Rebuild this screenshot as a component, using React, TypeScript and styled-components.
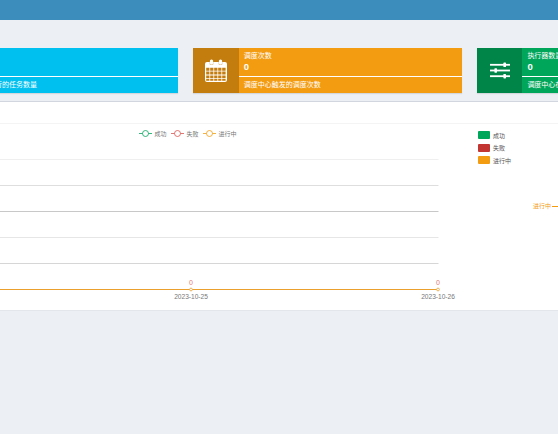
import React from 'react';
import styled, { createGlobalStyle } from 'styled-components';

// Dashboard stat cards and the report panel
const GlobalStyle = createGlobalStyle`
  html, body {
    margin: 0;
    padding: 0;
    height: 100%;
    background: #ecf0f5;
    overflow: hidden;
  }
  body {
    font-family: "Liberation Sans", "Noto Sans CJK SC", sans-serif;
  }
`;

const Page = styled.div`
  width: 558px;
  height: 434px;
  overflow: hidden;
  background: #ecf0f5;
`;

const TopBar = styled.div`
  height: 20px;
  background: #3c8dbc;
`;

const CardRow = styled.div`
  display: flex;
  gap: 15px;
  margin: 28px 0 0 -90.4px;
  width: 900px;
`;

const Card = styled.div<{ $bg: string }>`
  display: flex;
  flex: none;
  width: 268.7px;
  height: 45px;
  background: ${p => p.$bg};
  color: #fff;
  box-shadow: 0 1px 1px rgba(0, 0, 0, 0.1);
`;

const IconBox = styled.div<{ $bg: string }>`
  display: flex;
  flex: none;
  align-items: center;
  justify-content: center;
  width: 45.4px;
  background: ${p => p.$bg};
`;

const CardBody = styled.div`
  display: flex;
  flex: 1;
  flex-direction: column;
`;

const CardTitle = styled.div`
  padding: 4px 0 0 5px;
  font-size: 7px;
  line-height: 8px;
  white-space: nowrap;
`;

const CardValue = styled.div`
  padding: 1px 0 0 5px;
  font-size: 9.5px;
  font-weight: 700;
  line-height: 12px;
`;

const CardRule = styled.div`
  height: 1px;
  margin-top: 3px;
  background: #fff;
`;

const CardNote = styled.div`
  padding: 4px 0 0 5px;
  font-size: 7px;
  line-height: 8px;
  white-space: nowrap;
`;

const Panel = styled.section`
  height: 208px;
  margin-top: 8px;
  background: #fff;
  border-top: 1px solid #d2d6de;
  border-bottom: 1px solid #e3e6ea;
`;

const PanelHead = styled.div`
  height: 21px;
  border-bottom: 1px solid #f4f4f4;
`;

const PanelBody = styled.div`
  display: flex;
`;

const LineChart = styled.svg`
  display: block;
  flex: none;
  width: 478px;
  height: 186px;
`;

const SideChart = styled.div`
  display: flex;
  flex: 1;
  flex-direction: column;
  min-width: 0;
`;

const SideLegend = styled.ul`
  display: flex;
  flex-direction: column;
  gap: 4.5px;
  margin: 0;
  padding: 7px 0 0;
  list-style: none;
`;

const SideItem = styled.li`
  display: flex;
  align-items: center;
  gap: 3px;
  height: 8px;
  color: #555;
  font-size: 6px;
  white-space: nowrap;
`;

const Swatch = styled.span<{ $bg: string }>`
  width: 12px;
  height: 8px;
  border-radius: 1px;
  background: ${p => p.$bg};
`;

const SliceLabel = styled.div`
  display: flex;
  align-items: center;
  gap: 1px;
  margin: 38px 0 0 55px;
  color: #f39c12;
  font-size: 6px;
  line-height: 8px;
  white-space: nowrap;
`;

const SliceLead = styled.span`
  flex: none;
  width: 8px;
  height: 1px;
  background: #f39c12;
`;

const CalendarIcon = () => (
  <svg width="22" height="24" viewBox="0 0 22 24" fill="none">
    <path
      fillRule="evenodd"
      fill="#fff"
      d="M2 3h2.8v2.5h3.4V3h5.6v2.5h3.4V3H20a2 2 0 0 1 2 2v16a2 2 0 0 1-2 2H2a2 2 0 0 1-2-2V5a2 2 0 0 1 2-2zM1.2 8.8v3h3.2v-3zm4 0v3h3.2v-3zm4 0v3h3.2v-3zm4 0v3h3.2v-3zm4 0v3h3.4v-3zM1.2 12.6v3h3.2v-3zm4 0v3h3.2v-3zm4 0v3h3.2v-3zm4 0v3h3.2v-3zm4 0v3h3.4v-3zM1.2 16.4v2.8h3.2v-2.8zm4 0v2.8h3.2v-2.8zm4 0v2.8h3.2v-2.8zm4 0v2.8h3.2v-2.8zm4 0v2.8h3.4v-2.8zM1.2 20v1.8h3.2V20zm4 0v1.8h3.2V20zm4 0v1.8h3.2V20zm4 0v1.8h3.2V20zm4 0v1.8h3.4V20z"
    />
    <rect x="4.9" y="0.5" width="3.2" height="5" rx="1.5" fill="#fff" />
    <rect x="13.9" y="0.5" width="3.2" height="5" rx="1.5" fill="#fff" />
  </svg>
);

const SlidersIcon = () => (
  <svg width="20" height="17" viewBox="0 0 20 17" fill="#fff">
    <rect x="0" y="1.9" width="20" height="1.8" />
    <rect x="13.4" y="0.6" width="2.6" height="4.4" rx="0.6" />
    <rect x="0" y="7.6" width="20" height="1.8" />
    <rect x="4.4" y="6.3" width="2.6" height="4.4" rx="0.6" />
    <rect x="0" y="13.3" width="20" height="1.8" />
    <rect x="13.4" y="12" width="2.6" height="4.4" rx="0.6" />
  </svg>
);

const cards = [
  {
    bg: '#00c0ef',
    iconBg: '#00a7d0',
    title: '任务数量',
    note: '调度中心运行的任务数量',
    icon: null
  },
  {
    bg: '#f39c12',
    iconBg: '#c27d0e',
    title: '调度次数',
    note: '调度中心触发的调度次数',
    icon: <CalendarIcon />
  },
  {
    bg: '#00a65a',
    iconBg: '#008548',
    title: '执行器数量',
    note: '调度中心在线的执行器机器数量',
    icon: <SlidersIcon />
  }
];

// y of each horizontal split line, relative to the chart
const gridLines = [
  { y: 35.5, color: '#efefef' },
  { y: 61.5, color: '#dedede' },
  { y: 87.5, color: '#c8c8c8' },
  { y: 113.5, color: '#e6e6e6' },
  { y: 139.5, color: '#d6d6d6' }
];

const axisY = 165.5;

const legend = [
  { x: 139, label: '成功', color: '#00a65a' },
  { x: 171, label: '失败', color: '#d9534f' },
  { x: 203, label: '进行中', color: '#f39c12' }
];

const points = [
  { x: 191, date: '2023-10-25' },
  { x: 438, date: '2023-10-26' }
];

const sideLegend = [
  { label: '成功', color: '#00a65a' },
  { label: '失败', color: '#c23531' },
  { label: '进行中', color: '#f39c12' }
];

const App: React.FC = () => {
  return (
    <Page>
      <GlobalStyle />
      <TopBar />
      <CardRow>
        {cards.map(card => (
          <Card key={card.title} $bg={card.bg}>
            <IconBox $bg={card.iconBg}>{card.icon}</IconBox>
            <CardBody>
              <CardTitle>{card.title}</CardTitle>
              <CardValue>0</CardValue>
              <CardRule />
              <CardNote>{card.note}</CardNote>
            </CardBody>
          </Card>
        ))}
      </CardRow>
      <Panel>
        <PanelHead />
        <PanelBody>
          <LineChart viewBox="0 0 478 186">
            {legend.map(item => (
              <g key={item.label}>
                <line x1={item.x} x2={item.x + 13} y1="9.5" y2="9.5" stroke={item.color} strokeWidth="0.8" />
                <circle cx={item.x + 6.5} cy="9.5" r="3" fill="#fff" stroke={item.color} strokeWidth="0.8" />
                <text x={item.x + 15.5} y="11.8" fontSize="6" fill="#777">{item.label}</text>
              </g>
            ))}
            {gridLines.map(line => (
              <line key={line.y} x1="0" x2="438.5" y1={line.y} y2={line.y} stroke={line.color} strokeWidth="1" />
            ))}
            <line x1="0" x2="438.5" y1={axisY} y2={axisY} stroke="#eb9f2c" strokeWidth="1.2" />
            {points.map(point => (
              <g key={point.date}>
                <text x={point.x} y={axisY - 5} fontSize="7" fill="#e07a76" textAnchor="middle">0</text>
                <circle cx={point.x} cy={axisY} r="1.4" fill="#fff" stroke="#e8a238" strokeWidth="0.8" />
                <text x={point.x} y={axisY + 9.5} fontSize="6.6" fill="#777" textAnchor="middle">{point.date}</text>
              </g>
            ))}
          </LineChart>
          <SideChart>
            <SideLegend>
              {sideLegend.map(item => (
                <SideItem key={item.label}>
                  <Swatch $bg={item.color} />
                  {item.label}
                </SideItem>
              ))}
            </SideLegend>
            <SliceLabel>
              进行中
              <SliceLead />
            </SliceLabel>
          </SideChart>
        </PanelBody>
      </Panel>
    </Page>
  );
};

export default App;
